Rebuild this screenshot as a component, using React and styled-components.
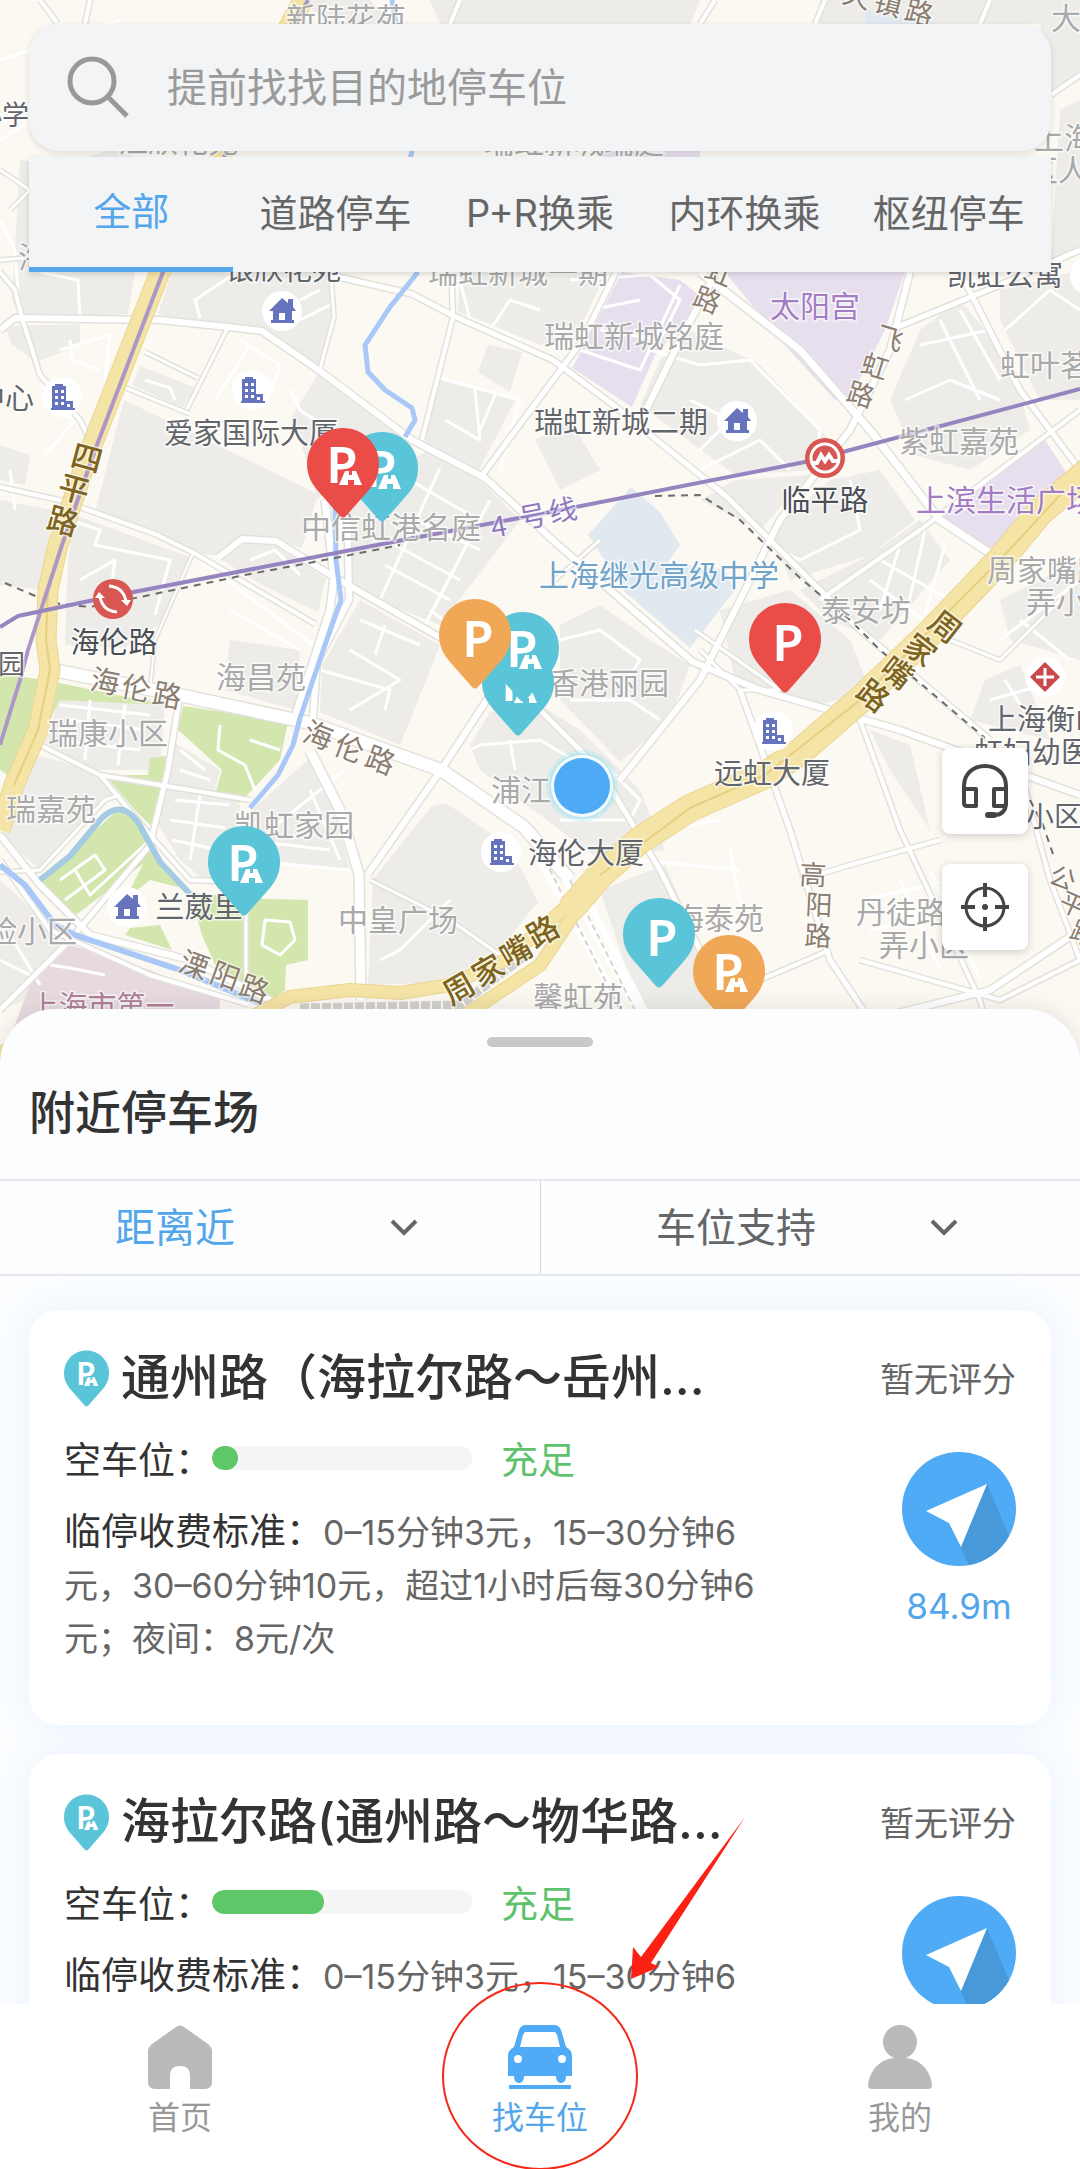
import { useState } from "react";
import styled, { createGlobalStyle } from "styled-components";

const GlobalStyle = createGlobalStyle`
  * {
    box-sizing: border-box;
  }
  body {
    margin: 0;
    font-family: Inter, "Noto Sans CJK SC", sans-serif;
    color: #333;
    background-color: #fff;
  }
  button, input, select {
    font-family: inherit;
  }
  h1, h2, p {
    margin: 0;
  }
`;

const Screen = styled.div`
  position: relative;
  display: flex;
  flex-direction: column;
  height: 100vh;
  overflow: hidden;
`;

/* ---------- map ---------- */

const MapArea = styled.section`
  position: relative;
  display: flex;
  flex-direction: column;
  flex: none;
  width: 100%;
  aspect-ratio: 1080 / 1064;
  padding: 24px 29px 114px;
`;

const MapCanvas = styled.svg`
  position: absolute;
  inset: 0;
  width: 100%;
  height: 100%;
  font-family: "Noto Sans CJK SC", sans-serif;
`;

const SearchBox = styled.label`
  position: relative;
  display: flex;
  align-items: center;
  gap: 38px;
  height: 127px;
  padding: 0 38px;
  border-radius: 30px;
  background-color: #f2f4f6;
  box-shadow: 0 2px 6px rgba(0, 0, 0, 0.12);
`;

const SearchInput = styled.input`
  flex: 1;
  min-width: 0;
  padding: 0;
  border: none;
  outline: none;
  background: transparent;
  font-size: 40px;
  color: #333;
  &::placeholder {
    color: #9a9a9a;
    opacity: 1;
  }
`;

const Tabs = styled.div`
  position: relative;
  display: flex;
  height: 115px;
  margin-top: 6px;
  background-color: #f2f4f6;
  box-shadow: 0 2px 6px rgba(0, 0, 0, 0.14);
`;

const Tab = styled.button`
  flex: 1;
  padding: 0 0 8px;
  border: none;
  border-bottom: ${(props) => (props.$active ? "5px solid #54a6ea" : "none")};
  background: transparent;
  font-size: 38px;
  white-space: nowrap;
  color: ${(props) => (props.$active ? "#54a6ea" : "#666")};
  cursor: pointer;
`;

const MapTools = styled.div`
  position: relative;
  display: flex;
  flex-direction: column;
  align-self: flex-end;
  gap: 30px;
  margin-top: auto;
  margin-right: 23px;
`;

const ToolButton = styled.button`
  display: flex;
  align-items: center;
  justify-content: center;
  width: 86px;
  height: 86px;
  padding: 0;
  border: none;
  border-radius: 8px;
  background-color: #fff;
  box-shadow: 0 2px 8px rgba(0, 0, 0, 0.18);
  cursor: pointer;
`;

/* ---------- sheet ---------- */

const Sheet = styled.section`
  position: relative;
  display: flex;
  flex-direction: column;
  flex: 1;
  min-height: 0;
  margin-top: -55px;
  border-radius: 55px 55px 0 0;
  background-color: #fcfdff;
  box-shadow: 0 0 24px rgba(0, 0, 0, 0.1);
`;

const Handle = styled.div`
  flex: none;
  width: 106px;
  height: 10px;
  margin: 28px auto 0;
  border-radius: 5px;
  background-color: #c8c9cb;
`;

const SheetTitle = styled.h1`
  padding: 0 29px;
  margin: 32px 0 34px;
  font-size: 46px;
  line-height: 66px;
  font-weight: 500;
`;

const Filters = styled.div`
  display: grid;
  grid-template-columns: 1fr 1fr;
  flex: none;
  height: 97px;
  border-top: 2px solid #e6e8eb;
  border-bottom: 2px solid #e6e8eb;
`;

const Filter = styled.label`
  position: relative;
  display: flex;
  align-items: center;
  & + & {
    border-left: 1px solid #d5d7da;
  }
  svg {
    position: absolute;
    right: 122px;
    pointer-events: none;
  }
`;

const FilterSelect = styled.select`
  appearance: none;
  width: 100%;
  height: 100%;
  padding: 0 160px 0 115px;
  border: none;
  outline: none;
  background: transparent;
  font-size: 40px;
  color: ${(props) => (props.$active ? "#54a6ea" : "#666")};
`;

const LotList = styled.ul`
  flex: 1;
  min-height: 0;
  margin: 0;
  padding: 34px 29px 0;
  overflow-y: auto;
  scrollbar-width: none;
  list-style: none;
  background-color: #fbfdff;
`;

const LotCard = styled.li`
  display: flex;
  justify-content: space-between;
  padding: 35px 35px 60px;
  margin-bottom: 29px;
  border-radius: 30px;
  background-color: #fff;
  box-shadow: 0 0 34px rgba(160, 200, 250, 0.2);
`;

const LotInfo = styled.div`
  flex: 0 1 700px;
  min-width: 0;
`;

const LotName = styled.h2`
  display: flex;
  align-items: center;
  gap: 12px;
  height: 70px;
  font-size: 49px;
  line-height: 62px;
  padding-bottom: 4px;
  font-weight: 500;
  white-space: nowrap;
`;

const SpaceRow = styled.div`
  display: flex;
  align-items: center;
  height: 54px;
  margin-top: 16px;
  font-size: 37px;
`;

const Track = styled.div`
  width: 260px;
  height: 24px;
  margin-right: 29px;
  border-radius: 12px;
  overflow: hidden;
  background-color: #f5f5f5;
`;

const Fill = styled.div`
  height: 100%;
  border-radius: 12px;
  background-color: #5ec767;
`;

const Status = styled.span`
  color: #5ec26c;
`;

const Fees = styled.p`
  margin-top: 20px;
  font-size: 34px;
  line-height: 53px;
  color: #666;
`;

const FeesLabel = styled.span`
  font-size: 37px;
  color: #333;
`;

const LotSide = styled.div`
  display: flex;
  flex-direction: column;
  align-items: flex-end;
`;

const Rating = styled.span`
  font-size: 34px;
  line-height: 70px;
  color: #666;
`;

const GoLink = styled.a`
  display: flex;
  flex-direction: column;
  align-items: center;
  gap: 16px;
  margin-top: 37px;
  font-size: 35px;
  line-height: 48px;
  color: #54a6ea;
  text-decoration: none;
`;

/* ---------- bottom bar ---------- */

const BottomBar = styled.nav`
  position: relative;
  display: grid;
  grid-template-columns: repeat(3, 1fr);
  flex: none;
  height: 165px;
  padding-top: 21px;
  background-color: #fff;
`;

const NavLink = styled.a`
  display: flex;
  flex-direction: column;
  align-items: center;
  gap: 5px;
  font-size: 32px;
  line-height: 48px;
  color: ${(props) => (props.$active ? "#54a6ea" : "#999")};
  text-decoration: none;
`;

const Marker = styled.svg`
  position: absolute;
  left: 50%;
  bottom: 0;
  margin-left: -110px;
  pointer-events: none;
`;

/* ---------- map data ---------- */

const GRAY = "#a9a9a9";
const DARK = "#62656b";
const BROWN = "#8b7d70";
const OLIVE = "#7d6420";
const PURPLE = "#a37cc4";

const labels = [
  [346, 18, "新陆花苑", GRAY, 30],
  [29, 115, "小学", DARK, 27, "end"],
  [178, 141, "江欣花苑", GRAY, 30],
  [574, 142, "瑞虹新城瑞庭", GRAY, 30],
  [283, 269, "银欣花苑", DARK, 29],
  [518, 272, "瑞虹新城一期", GRAY, 30],
  [48, 257, "海伦", GRAY, 30],
  [1051, 18, "大连", GRAY, 30, "start"],
  [1034, 138, "上海市", GRAY, 30, "start"],
  [1028, 170, "区人民", GRAY, 30, "start"],
  [1005, 275, "凯虹公寓", DARK, 29],
  [815, 306, "太阳宫", PURPLE, 30],
  [634, 336, "瑞虹新城铭庭", GRAY, 30],
  [621, 422, "瑞虹新城二期", DARK, 29],
  [1000, 365, "虹叶茗园", GRAY, 30, "start"],
  [959, 441, "紫虹嘉苑", GRAY, 30],
  [916, 500, "上滨生活广场", PURPLE, 30, "start"],
  [825, 500, "临平路", "#4a4e55", 29],
  [987, 570, "周家嘴路", GRAY, 30, "start"],
  [1026, 602, "弄小区", GRAY, 30, "start"],
  [866, 610, "泰安坊", GRAY, 30],
  [659, 575, "上海继光高级中学", "#70a3c9", 30],
  [391, 527, "中信虹港名庭", GRAY, 30],
  [34, 398, "中心", DARK, 29, "end"],
  [251, 433, "爱家国际大厦", DARK, 29],
  [114, 642, "海伦路", "#4a4e55", 29],
  [25, 664, "园", DARK, 27, "end"],
  [261, 677, "海昌苑", GRAY, 30],
  [108, 733, "瑞康小区", GRAY, 30],
  [51, 809, "瑞嘉苑", GRAY, 30],
  [294, 825, "凯虹家园", GRAY, 30],
  [199, 907, "兰葳里", DARK, 29],
  [77, 931, "险小区", GRAY, 30, "end"],
  [398, 920, "中皇广场", GRAY, 30],
  [102, 1006, "上海市第一", "#b1809a", 29],
  [586, 853, "海伦大厦", DARK, 29],
  [609, 683, "香港丽园", GRAY, 30],
  [772, 773, "远虹大厦", DARK, 29],
  [521, 790, "浦江", GRAY, 30],
  [719, 918, "海泰苑", GRAY, 30],
  [856, 912, "丹徒路", GRAY, 30, "start"],
  [879, 945, "弄小区", GRAY, 30, "start"],
  [988, 719, "上海衡山", DARK, 29, "start"],
  [974, 752, "虹妇幼医", DARK, 29, "start"],
  [1026, 817, "小区", DARK, 28, "start"],
  [578, 997, "馨虹苑", GRAY, 30],
];

// every character of a road name has its own centre, all share one angle
const roadNames = [
  ["天镇路", [[857, -4], [888, 4], [919, 13]], 15, BROWN, 28],
  ["虹路", [[719, 273], [707, 300]], 22, BROWN, 27],
  ["飞虹路", [[890, 338], [875, 366], [861, 394]], 17, BROWN, 27],
  ["四平路", [[87, 458], [74, 489], [63, 521]], 15, OLIVE, 31],
  ["海伦路", [[105, 681], [136, 688], [167, 695]], 11, BROWN, 29],
  ["海伦路", [[318, 735], [349, 748], [380, 760]], 21, BROWN, 29],
  ["溧阳路", [[194, 965], [225, 976], [254, 989]], 20, BROWN, 29],
  ["周家嘴路", [[459, 988], [488, 970], [516, 951], [543, 931]], -30, OLIVE, 31],
  ["周家嘴路", [[945, 627], [920, 650], [897, 673], [873, 696]], 38, OLIVE, 31],
  ["高阳路", [[813, 875], [819, 905], [818, 936]], 3, BROWN, 27],
  ["公平路", [[1063, 878], [1073, 904], [1084, 933]], 24, BROWN, 26],
  ["4号线", [[505, 525], [533, 516], [563, 510]], -11, "#8f78bf", 28],
];

const pins = [
  { x: 382, y: 432, color: "#5ac4d8", road: true },
  { x: 343, y: 428, color: "#ea4c48", road: true },
  { x: 518, y: 646, color: "#5ac4d8", road: true },
  { x: 523, y: 612, color: "#5ac4d8", road: true },
  { x: 475, y: 599, color: "#f0a857" },
  { x: 785, y: 603, color: "#ea4c48" },
  { x: 244, y: 826, color: "#5ac4d8", road: true },
  { x: 659, y: 898, color: "#5ac4d8" },
  { x: 729, y: 935, color: "#f0a857", road: true },
];

const grayBlocks = [
  "M20 160L60 165L110 150L150 160L135 272L128 314L22 318L12 300Z",
  "M175 262L330 262L334 317L320 366L262 331L228 325L170 318L158 314Z",
  "M5 326L80 324L80 345L36 362L12 345Z",
  "M140 366L196 388L182 408L132 385Z",
  "M124 400L318 494L302 548L276 540L242 538L218 556L194 552L95 512Z",
  "M0 445L30 455L25 485L0 480Z",
  "M0 500L52 510L45 590L0 585Z",
  "M75 515L192 558L165 620L125 648L65 645L68 560Z",
  "M222 560L245 543L276 546L326 578L318 612L262 585Z",
  "M318 374L350 388L412 440L378 470L345 462L318 500L300 440L290 420Z",
  "M300 0L370 0L395 24L330 24Z M430 0L700 0L690 24L440 24Z",
  "M820 0L1080 0L1080 80L1051 90L1040 24L820 24Z",
  "M460 272L606 272L575 340L540 345L480 320L458 312Z",
  "M440 380L515 400L478 472L425 448L432 400Z",
  "M488 345L522 352L510 392L478 372Z",
  "M535 440L570 420L600 470L560 490Z",
  "M430 450L480 480L520 520L490 560L440 625L352 590L352 500L390 470Z",
  "M360 600L440 645L400 745L320 712L322 665Z",
  "M660 360L690 330L760 365L830 440L815 470L735 475L640 405Z",
  "M735 480L810 475L760 530L700 500Z",
  "M830 480L880 470L915 520L870 555L790 580L770 530Z",
  "M890 400L920 330L960 300L1010 360L1030 430L970 470L915 455Z",
  "M1000 290L1080 270L1080 400L1040 400L1000 320Z",
  "M1060 110L1080 100L1080 250L1051 260Z",
  "M870 555L920 520L950 560L880 640L830 620L800 590Z",
  "M720 610L790 590L850 640L870 690L820 705L735 680Z",
  "M560 625L600 605L650 640L690 665L670 720L620 762L560 700Z",
  "M470 745L490 712L540 705L580 730L640 790L665 850L600 860L560 830L480 770Z",
  "M600 890L665 865L720 990L700 1030L650 1040Z",
  "M870 730L910 745L930 830L890 770Z",
  "M985 680L1020 665L1050 740L970 720Z",
  "M432 806L446 803L509 846L538 902L499 950L460 982L368 985L373 879Z",
  "M60 695L165 700L160 770L95 770L45 745Z",
  "M35 755L95 770L115 795L40 870L0 835Z",
  "M170 740L220 770L215 790L240 805L235 860L210 885L180 860L155 820Z",
  "M0 880L60 935L50 990L0 1010Z",
  "M230 640L300 650L296 710L225 690Z",
  "M308 760L330 790L350 870L250 860L240 820Z",
  "M1000 600L1080 560L1080 660L1010 640Z",
];

const greenBlocks = [
  "M0 673L55 682L165 705L60 700L40 740L15 780L0 770Z",
  "M183 706L288 722L280 760L240 803L215 795L222 770L195 745L178 730Z",
  "M105 775L163 782L155 830L135 810Z",
  "M150 758L166 756L163 782L110 775L148 775Z",
  "M120 808L150 835L148 860L72 918L40 880Z",
  "M150 850L190 890L150 880L125 900Z",
  "M130 928L160 925L172 950L125 935Z",
  "M190 892L240 898L308 900L308 960L286 965L285 990L272 1000L215 965L202 935Z",
];

const smallRoads = [
  "M0 140L80 90L60 20M80 90L200 60M0 60L120 20M20 318L15 250L0 220",
  "M80 320L78 280L40 272M200 318L195 300L240 270M300 320L330 305M300 300L320 290",
  "M60 350L110 335L105 380M10 470L15 510M45 455L75 420L45 400M70 340L72 360L100 370",
  "M250 345L215 400M240 340L280 365L270 395M290 390L300 410L330 430M145 380L170 388L175 400",
  "M70 520L100 530L95 545L170 560L155 615M80 580L115 560L112 580M250 560L275 550L300 575M200 560L320 650M230 610L300 650",
  "M460 280L470 320L520 340M440 378L520 400L500 470M445 420L480 440L475 390M480 430L495 395M490 330L510 300L540 310",
  "M570 280L650 275L680 300L660 340L600 330M590 310L640 300M580 350L640 370L680 285",
  "M650 350L700 365L750 360L820 430L815 470M700 470L760 440L790 470M690 400L730 420L700 450",
  "M760 540L800 560L860 530L850 480M905 400L950 380L1000 400M920 345L990 330M940 320L980 400M960 310L1000 380M1005 330L1050 290L1080 310",
  "M880 560L950 600M870 580L930 625M900 545L880 610M925 530L905 620M945 545L925 615",
  "M1000 640L1080 580M1020 620L1070 660M990 700L1060 680M1005 680L1030 720",
  "M360 620L420 645M385 625L375 655M350 650L400 680L350 710M440 468L380 600M490 500L425 625M405 515L480 550M395 545L460 580M385 565L450 600M410 480L470 515M430 610L470 640",
  "M470 750L480 745L540 740L590 770M510 740L515 770M560 820L630 820L640 800L600 760M570 700L630 700L660 720M560 640L600 630L640 660L620 690",
  "M60 705L150 715M70 720L145 730M55 740L140 750M90 700L85 760M125 705L118 765",
  "M175 800L230 805M170 820L225 828M172 840L220 850M200 795L190 860M180 750L205 770M180 770L210 780M220 725L218 750L245 765L255 790M250 740L280 750",
  "M60 880L95 855L105 870L65 900M75 870L90 895L150 840M265 920L290 922L295 940L280 955L262 945Z",
  "M240 860L350 870M245 840L330 850M270 830L345 770M310 790L340 860M50 965L70 968L105 975",
  "M860 900L1000 870M870 930L1010 900M900 880L940 970M930 870L980 980M640 860L740 870M730 850L745 930M660 830L720 820",
  "M380 960L400 950L450 900M0 960L30 975M10 935L40 985M320 670L390 690L385 710",
];

const roads = [
  ["M0 330L15 318L160 320L228 327L262 331L320 371L412 440L485 478L557 544L693 662L760 690L900 730L1080 795", 9],
  ["M0 487L63 501L155 534L194 553L315 624", 7],
  ["M218 558L242 539L276 541L334 577L441 638L500 670", 9],
  ["M0 272L15 290L22 318L40 375L80 420L95 450", 7],
  ["M330 262L334 317L320 369", 6],
  ["M228 327L187 409", 6],
  ["M126 388L190 414M145 352L198 378", 6],
  ["M330 275L412 294L456 317L553 360L616 407L727 497L860 630L990 740", 8],
  ["M451 262L453 317L422 440", 7],
  ["M616 272L582 341L480 478", 8],
  ["M193 553L155 640L150 690", 5],
  ["M715 275L680 340L645 412", 9],
  ["M700 272L800 350L870 430L940 520L1000 560", 10],
  ["M910 272L890 350L850 430L780 520L700 680L620 780", 9],
  ["M890 330L1000 285L1080 250", 8],
  ["M960 272L1020 390L1080 470", 8],
  ["M820 600L920 530L1040 440L1080 410", 7],
  ["M58 671L179 695L310 723L441 770L524 827L570 880", 15],
  ["M325 500L334 577L330 610L296 714", 10],
  ["M347 490L349 600L317 662L313 718", 9],
  ["M555 580L600 540", 6],
  ["M520 690L600 770L660 870L720 990L740 1030", 8],
  ["M179 700L168 770L150 845L70 940L0 1010", 8],
  ["M40 745L100 775L250 800", 7],
  ["M100 775L150 835L190 880L240 882", 7],
  ["M0 835L40 885L90 935L190 960L280 1005", 9],
  ["M0 860L50 930L150 975L250 1005", 7],
  ["M310 751L340 810L359 874L361 1000", 12],
  ["M490 695L441 770L368 874", 9],
  ["M370 880L450 920L500 955", 6],
  ["M246 905L246 985", 6],
  ["M0 872L40 870L105 800L120 795", 6],
  ["M695 630L780 690L740 690L700 650", 6],
  ["M740 690L790 830L830 960L870 1020", 8],
  ["M860 720L900 830L980 1000L990 1040", 7],
  ["M800 880L850 865L940 840", 7],
  ["M760 980L830 950M860 960L1000 1000L1080 960", 7],
  ["M870 1020L990 990L1080 930", 9],
  ["M1020 770L1050 880L1080 960", 7],
  ["M1060 600L1000 660L950 640", 6],
  ["M40 0L58 24M90 0L85 24M460 0L450 24M700 24L715 0M825 0L815 24M990 0L980 24M1051 95L1080 75", 7],
  ["M0 170L30 190L10 210M0 260L25 258", 6],
];

function MapLabel({ x, y, text, color, size, anchor = "middle" }) {
  return (
    <text
      x={x}
      y={y + Math.round(size * 0.37)}
      fontSize={size}
      fill={color}
      textAnchor={anchor}
      stroke="#fff"
      strokeOpacity="0.7"
      strokeWidth="3"
      paintOrder="stroke"
    >
      {text}
    </text>
  );
}

function RoadName({ text, points, angle, color, size }) {
  const rad = (angle * Math.PI) / 180;
  const dx = size / 2;
  const dy = -size * 0.37;
  const xs = points.map(([x]) => Math.round(x - dx * Math.cos(rad) + dy * Math.sin(rad)));
  const ys = points.map(([, y]) => Math.round(y - dx * Math.sin(rad) - dy * Math.cos(rad)));
  return (
    <text
      x={xs.join(" ")}
      y={ys.join(" ")}
      rotate={angle}
      fontSize={size}
      fontWeight={color === OLIVE ? 500 : 400}
      fill={color}
      stroke="#fff"
      strokeOpacity="0.6"
      strokeWidth="3"
      paintOrder="stroke"
    >
      {text}
    </text>
  );
}

// 72 x 90 drop, origin at its top left corner
function PinShape({ color, road }) {
  return (
    <>
      <path
        d="M36 0C16 0 0 16 0 36C0 48 5 56 11 63L33 88Q36 91 39 88L61 63C67 56 72 48 72 36C72 16 56 0 36 0Z"
        fill={color}
      />
      <text
        x={road ? 35 : 39}
        y={road ? 55 : 58}
        fontFamily="Noto Sans, sans-serif"
        fontSize="51"
        fontWeight="600"
        fill="#fff"
        textAnchor="middle"
      >
        P
      </text>
      {road && (
        <path
          d="M38 43H42V47H45V43H49L55 57H47V52H41V57H32Z"
          fill="#fff"
          stroke={color}
          strokeWidth="4"
          paintOrder="stroke"
        />
      )}
    </>
  );
}

function HousePoi({ x, y }) {
  return (
    <g transform={`translate(${x} ${y})`}>
      <circle r="20" fill="#fff" />
      <path d="M0 -13L6 -8V-12H11V-4L14 0H10V9H12V12H-11V9H-9V0H-13Z M-3 2V9H3V2Z" fill="#6674bd" fillRule="evenodd" />
    </g>
  );
}

function TowerPoi({ x, y }) {
  return (
    <g transform={`translate(${x} ${y})`}>
      <circle r="20" fill="#fff" />
      <path d="M-7 -13H1V-11H4V4H11V11H13V13H-11V11H-10V-11H-7Z" fill="#6674bd" />
      <path d="M-7 -7h3v3h-3z M-1 -7h3v3h-3z M-7 -1h3v3h-3z M-1 -1h3v3h-3z M-7 5h3v3h-3z M-1 5h3v3h-3z M5 7h3v3h-3z" fill="#fff" />
    </g>
  );
}

function CityMap() {
  return (
    <MapCanvas viewBox="0 0 1080 1064" preserveAspectRatio="xMidYMin slice" role="img" aria-label="地图">
      <rect width="1080" height="1064" fill="#fcf9f2" />
      <path d={grayBlocks.join("")} fill="#edece8" />
      <path d={greenBlocks.join("")} fill="#d3e6ad" />
      <path d="M725 272H905L885 330L850 398L835 400L780 340Z M622 272L680 280L705 300L655 355L632 407L572 368Z M998 472L1045 440L1068 475L1000 548L985 555L940 515Z M600 151H700V157H600Z" fill="#e7dfed" />
      <path d="M631 487L660 512L680 545L668 562L725 570L735 590L690 648L625 592L588 535Z M865 10L940 24H865Z" fill="#dfe9ef" />
      <path d="M70 945L150 970L220 1000L215 1064H0L30 985Z" fill="#e6dade" />

      <g fill="none" strokeLinejoin="round">
        {smallRoads.map((d) => (
          <path key={d} d={d} stroke="#fff" strokeWidth="3" />
        ))}
        {roads.map(([d, width]) => (
          <path key={d} d={d} stroke="#e3e1dc" strokeWidth={width} />
        ))}
        {roads.map(([d, width]) => (
          <path key={d} d={d} stroke="#fff" strokeWidth={width - 3} />
        ))}
        <path d="M392 0L396 24M412 151L410 160M418 272L390 307L365 345L368 372L385 390L412 408L415 420L405 437M335 500L336 560L341 600L325 645L300 718L293 745L278 775L250 808" stroke="#a9c8f7" strokeWidth="5" />
        <path d="M0 865L25 885L55 925L75 935L180 970L262 1004" stroke="#a9c8f7" strokeWidth="6" />
        <path d="M40 880L70 856L100 820Q120 798 138 822L160 862L190 894" stroke="#a5cbe4" strokeWidth="6" />
        <path d="M540 860L650 1060M560 870L665 1060M590 905L670 1060" stroke="#fff" strokeWidth="7" />
        <path d="M545 860L645 1060M570 880L660 1060" stroke="#d6d5d2" strokeWidth="2" strokeDasharray="6 4" />
        <path d="M300 1008L460 1005L530 952" stroke="#d2d1ce" strokeWidth="9" strokeDasharray="9 2" />
        <path d="M5 583L40 598L60 604L90 607L140 597L250 574L335 558L400 545M655 496L700 495L740 520L800 578L850 620L880 650L914 678L985 738M1030 800L1043 825L1055 860" stroke="#6d6d6d" strokeWidth="2" strokeDasharray="7 6" />

        <g stroke="#ead594">
          <path d="M303 0L160 272L87 458L58 545L48 590L46 640L50 670L38 730L14 785L0 830" strokeWidth="21" />
          <path d="M1090 470L1040 512L1000 560L930 633L860 700L800 752L765 775L690 808L640 840L600 875L570 910" strokeWidth="28" />
          <path d="M600 875L540 965L470 1012L420 1040M585 890L540 930L505 960L450 985L400 993L350 990L290 997L255 1015" strokeWidth="14" />
          <path d="M0 1045L8 1064" strokeWidth="14" />
        </g>
        <g stroke="#f4e4a5">
          <path d="M303 0L160 272L87 458L58 545L48 590L46 640L50 670L38 730L14 785L0 830" strokeWidth="19" />
          <path d="M1090 470L1040 512L1000 560L930 633L860 700L800 752L765 775L690 808L640 840L600 875L570 910" strokeWidth="26" />
          <path d="M600 875L540 965L470 1012L420 1040M585 890L540 930L505 960L450 985L400 993L350 990L290 997L255 1015" strokeWidth="12" />
          <path d="M0 1045L8 1064" strokeWidth="12" />
        </g>
        <path d="M1060 495L1000 560L860 700L765 775L690 808L600 875M48 590L46 640L50 670L38 730L14 785" stroke="#e6cf80" strokeWidth="2" />
        <path d="M308 0L163 272L95 450L62 545L28 650L20 680L0 745" stroke="#ad97c6" strokeWidth="4" />
        <path d="M0 627L18 616L113 596L403 540L535 515L805 462L1080 389" stroke="#9684c0" strokeWidth="4" />
      </g>

      {labels.map(([x, y, text, color, size, anchor]) => (
        <MapLabel key={`${x}-${y}`} x={x} y={y} text={text} color={color} size={size} anchor={anchor} />
      ))}
      {roadNames.map(([text, points, angle, color, size]) => (
        <RoadName key={points[0].join()} text={text} points={points} angle={angle} color={color} size={size} />
      ))}

      <HousePoi x={282} y={311} />
      <HousePoi x={737} y={421} />
      <HousePoi x={127} y={907} />
      <TowerPoi x={62} y={397} />
      <TowerPoi x={252} y={390} />
      <TowerPoi x={501} y={852} />
      <TowerPoi x={773} y={731} />
      <circle cx="1090" cy="275" r="20" fill="#fff" />

      <g transform="translate(113 599)" fill="none" stroke="#fff" strokeWidth="3">
        <circle r="20" fill="#d85752" stroke="none" />
        <path d="M-4 -13Q10 -12 13 2M4 13Q-10 12 -13 -2" />
        <path d="M8 1H18L14 7ZM-8 -1H-18L-14 -7Z" fill="#fff" stroke="none" />
      </g>
      <g transform="translate(825 458)" fill="none" stroke="#fff" strokeWidth="3">
        <circle r="20" fill="#d85752" stroke="none" />
        <circle r="14" />
        <path d="M-14 5H-8L-4 -3L0 3L4 -3L8 3H15" strokeWidth="4" />
      </g>
      <g transform="translate(1045 677)">
        <circle r="20" fill="#fff" />
        <path d="M0 -15L15 0L0 15L-15 0Z" fill="#c9494d" />
        <path d="M0 -9V9M-9 0H9" stroke="#fff" strokeWidth="3" />
      </g>

      {pins.map((pin) => (
        <g key={`${pin.x}-${pin.y}`} transform={`translate(${pin.x - 36} ${pin.y})`}>
          <PinShape color={pin.color} road={pin.road} />
        </g>
      ))}

      <circle cx="582" cy="786" r="36" fill="#9be0ec" opacity="0.3" />
      <circle cx="582" cy="786" r="33" fill="#a9e2ee" opacity="0.6" />
      <circle cx="582" cy="786" r="31" fill="#f3fbff" />
      <circle cx="582" cy="786" r="28" fill="#4eaaf4" />
    </MapCanvas>
  );
}

/* ---------- icons ---------- */

const SearchIcon = () => (
  <svg width="62" height="64" viewBox="0 0 62 64" fill="none" stroke="#999" strokeWidth="5">
    <circle cx="25" cy="25" r="22" />
    <path d="M41 41L60 60" />
  </svg>
);

const HeadsetIcon = () => (
  <svg width="48" height="56" viewBox="0 0 48 56" fill="none" stroke="#444" strokeWidth="4">
    <path d="M3 40V23C3 11 12 3 24 3S45 11 45 23V40C45 48 40 52 34 52" />
    <path d="M3 26H15V43H6Q3 43 3 40ZM45 26H33V43H42Q45 43 45 40Z" strokeLinejoin="round" />
    <path d="M27 52H33" strokeWidth="6" strokeLinecap="round" />
  </svg>
);

const TargetIcon = () => (
  <svg width="48" height="48" viewBox="0 0 48 48" fill="none" stroke="#444" strokeWidth="3">
    <circle cx="24" cy="24" r="19" />
    <path d="M24 0V14M24 34V48M0 24H14M34 24H48" strokeWidth="4" />
    <circle cx="24" cy="24" r="3" fill="#444" stroke="none" />
  </svg>
);

const ChevronIcon = () => (
  <svg width="28" height="18" viewBox="0 0 28 18" fill="none" stroke="#666" strokeWidth="4">
    <path d="M2 2L14 14L26 2" />
  </svg>
);

const NavigateIcon = () => (
  <svg width="114" height="114" viewBox="0 0 114 114">
    <circle cx="57" cy="57" r="57" fill="#4fabf5" />
    <path d="M85 32L107 84A57 57 0 0 1 67 113L58 94Z" fill="#4799da" />
    <path d="M85 32L24 59L47 71L59 95Z" fill="#fff" />
  </svg>
);

const HomeIcon = () => (
  <svg width="64" height="64" viewBox="0 0 64 64">
    <path d="M28 2Q32 -1 36 2L60 19Q64 22 64 27V57Q64 64 57 64H42V50Q42 41 32 41T22 50V64H7Q0 64 0 57V27Q0 22 4 19Z" fill="#b9b9b9" />
  </svg>
);

const CarIcon = () => (
  <svg width="64" height="64" viewBox="0 0 64 64" fill="#4fabf5">
    <path
      fillRule="evenodd"
      d="M18 0H46Q51 0 53 5L58 22Q64 25 64 31V51H58Q58 58 53 58T48 51H16Q16 58 11 58T6 51H0V31Q0 25 6 22L11 5Q13 0 18 0ZM18 7Q16 7 15 10L12 22H52L49 10Q48 7 46 7ZM10 30A4 4 0 1 0 10 38A4 4 0 1 0 10 30ZM54 30A4 4 0 1 0 54 38A4 4 0 1 0 54 30Z"
    />
    <rect x="1" y="60" width="62" height="4" />
  </svg>
);

const UserIcon = () => (
  <svg width="64" height="64" viewBox="0 0 64 64" fill="#b9b9b9">
    <circle cx="32" cy="17" r="17" />
    <path d="M0 60C2 43 14 34 26 33H38C50 34 62 43 64 60Q64 64 60 64H4Q0 64 0 60Z" />
  </svg>
);

/* ---------- page ---------- */

const tabs = ["全部", "道路停车", "P+R换乘", "内环换乘", "枢纽停车"];

const feeText = "0–15分钟3元，15–30分钟6元，30–60分钟10元，超过1小时后每30分钟6元；夜间：8元/次";

const lots = [
  { name: "通州路（海拉尔路～岳州...", free: 10, status: "充足", fees: feeText, distance: "84.9m" },
  { name: "海拉尔路(通州路～物华路...", free: 43, status: "充足", fees: feeText },
];

function Lot({ lot }) {
  return (
    <LotCard>
      <LotInfo>
        <LotName>
          <svg width="45" height="61" viewBox="0 -2 72 94" aria-hidden="true">
            <PinShape color="#5ac4d8" road />
          </svg>
          {lot.name}
        </LotName>
        <SpaceRow>
          空车位：
          <Track role="meter" aria-label="空车位" aria-valuenow={lot.free} aria-valuemin={0} aria-valuemax={100}>
            <Fill style={{ width: `${lot.free}%` }} />
          </Track>
          <Status>{lot.status}</Status>
        </SpaceRow>
        <Fees>
          <FeesLabel>临停收费标准：</FeesLabel>
          {lot.fees}
        </Fees>
      </LotInfo>
      <LotSide>
        <Rating>暂无评分</Rating>
        <GoLink href="#navigate" aria-label="导航">
          <NavigateIcon />
          {lot.distance}
        </GoLink>
      </LotSide>
    </LotCard>
  );
}

const App = () => {
  const [tab, setTab] = useState("全部");

  return (
    <>
      <GlobalStyle />
      <Screen>
        <MapArea>
          <CityMap />
          <SearchBox>
            <SearchIcon />
            <SearchInput type="text" placeholder="提前找找目的地停车位" aria-label="搜索" />
          </SearchBox>
          <Tabs>
            {tabs.map((name) => (
              <Tab key={name} $active={name === tab} onClick={() => setTab(name)}>
                {name}
              </Tab>
            ))}
          </Tabs>
          <MapTools>
            <ToolButton aria-label="客服">
              <HeadsetIcon />
            </ToolButton>
            <ToolButton aria-label="定位">
              <TargetIcon />
            </ToolButton>
          </MapTools>
        </MapArea>

        <Sheet>
          <Handle />
          <SheetTitle>附近停车场</SheetTitle>
          <Filters>
            <Filter>
              <FilterSelect $active aria-label="排序">
                <option>距离近</option>
              </FilterSelect>
              <ChevronIcon />
            </Filter>
            <Filter>
              <FilterSelect aria-label="筛选">
                <option>车位支持</option>
              </FilterSelect>
              <ChevronIcon />
            </Filter>
          </Filters>
          <LotList>
            {lots.map((lot) => (
              <Lot key={lot.name} lot={lot} />
            ))}
          </LotList>
        </Sheet>

        <BottomBar>
          <NavLink href="#home">
            <HomeIcon />
            首页
          </NavLink>
          <NavLink href="#parking" $active>
            <CarIcon />
            找车位
          </NavLink>
          <NavLink href="#me">
            <UserIcon />
            我的
          </NavLink>
        </BottomBar>

        <Marker width="320" height="360" viewBox="0 0 320 360" aria-hidden="true">
          <ellipse cx="110" cy="267" rx="97" ry="93" fill="none" stroke="#f5281a" strokeWidth="2" />
          <path d="M315 8L221 154L229 158L201 170L203 138L211 148Z" fill="#fc2112" />
        </Marker>
      </Screen>
    </>
  );
};

export default App;
